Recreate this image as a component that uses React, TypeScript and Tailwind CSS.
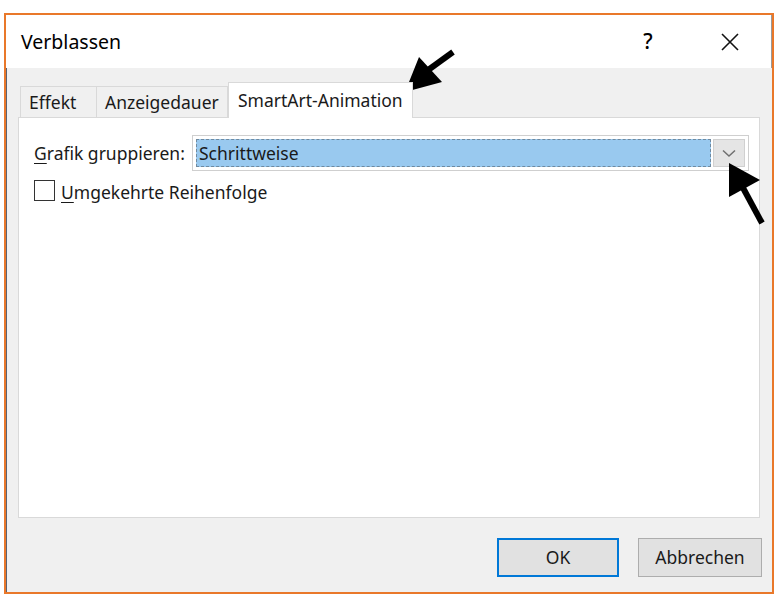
import React from "react";

export default function App() {
  const font = { fontFamily: '"Noto Sans", "Open Sans", sans-serif' };
  return (
    <div className="relative w-[781px] h-[596px] bg-white overflow-hidden" style={font}>
      <div className="ml-[4px] mt-[13px] w-[770px] h-[581px] border-2 border-[#e9782a] flex flex-col">
        {/* Title bar */}
        <div className="h-[53px] shrink-0 bg-white flex items-center border-r border-[#9a9a9a]">
          <div className="pl-[15px] text-[19.5px] text-black leading-none">Verblassen</div>
          <div className="flex-1" />
          <div className="text-[21px] font-medium text-black leading-none w-[20px] text-center mr-[62px]">?</div>
          <svg width="20" height="20" viewBox="0 0 20 20" className="mr-[31px]">
            <path d="M2 2 L18 18 M18 2 L2 18" stroke="#111" strokeWidth="1.6" />
          </svg>
        </div>
        {/* Body */}
        <div className="flex-1 bg-[#f0f0f0] flex flex-col pl-[11px] pr-[12px] border-l border-[#5b6170]">
          {/* Tabs */}
          <div className="flex items-end pt-[14px] pl-[2px] h-[49px] text-[17.5px] text-[#1a1a1a] whitespace-nowrap">
            <div className="h-[31px] w-[77px] border border-b-0 border-[#d9d9d9] bg-[#f0f0f0] flex items-center pl-[8px]">
              Effekt
            </div>
            <div className="h-[31px] w-[131px] border border-l-0 border-b-0 border-[#d9d9d9] bg-[#f0f0f0] flex items-center pl-[8px]">
              Anzeigedauer
            </div>
            <div className="relative z-10 h-[36px] w-[185px] border border-b-0 border-[#d9d9d9] bg-white flex items-center pl-[9px] -mb-[1px]">
              SmartArt-Animation
            </div>
          </div>
          {/* Panel */}
          <div className="h-[401px] bg-white border border-[#d9d9d9] pl-[15px] pr-[10px] pt-[17px]">
            <div className="flex items-center h-[36px]">
              <div className="w-[158px] text-[17.5px] text-[#1a1a1a] whitespace-nowrap">
                <span className="underline underline-offset-[3px]">G</span>rafik gruppieren:
              </div>
              <div className="flex-1 h-[36px] border border-[#cfcfcf] bg-white flex items-center p-[3px] gap-[2px]">
                <div className="flex-1 h-full bg-[#99c9ef] border border-dashed border-[#6f8aa0] flex items-center pl-[2px] text-[17.5px] text-[#1a1a1a]">
                  Schrittweise
                </div>
                <div className="w-[32px] h-full bg-[#e5e5e5] border border-[#d0d0d0] flex items-center justify-center">
                  <svg width="14" height="9" viewBox="0 0 14 9">
                    <path d="M1 1.5 L7 7 L13 1.5" stroke="#707070" strokeWidth="1.5" fill="none" />
                  </svg>
                </div>
              </div>
            </div>
            <div className="flex items-center mt-[9px] h-[21px]">
              <div className="w-[21px] h-[21px] border border-[#333] bg-white" />
              <div className="ml-[6px] pt-[4px] text-[17.5px] text-[#1a1a1a] whitespace-nowrap">
                <span className="underline underline-offset-[3px]">U</span>mgekehrte Reihenfolge
              </div>
            </div>
          </div>
          {/* Buttons */}
          <div className="flex justify-end items-start pt-[20px] gap-[19px] text-[17.5px] text-[#1a1a1a]">
            <div className="w-[122px] h-[39px] bg-[#e1e1e1] border-2 border-[#0078d7] flex items-center justify-center">
              OK
            </div>
            <div className="w-[124px] h-[39px] bg-[#e1e1e1] border border-[#adadad] flex items-center justify-center -mr-[2px]">
              Abbrechen
            </div>
          </div>
        </div>
      </div>
      {/* Arrows */}
      <svg className="absolute left-0 top-0 pointer-events-none" width="781" height="596" viewBox="0 0 781 596">
        <path d="M453 52 L424 73" stroke="#000" strokeWidth="6" strokeLinecap="butt" />
        <polygon points="405,92 419,57 442,82" fill="#000" />
        <path d="M762 223 L742 186" stroke="#000" strokeWidth="6" strokeLinecap="butt" />
        <polygon points="729,163 729,197 760,180" fill="#000" />
      </svg>
    </div>
  );
}
